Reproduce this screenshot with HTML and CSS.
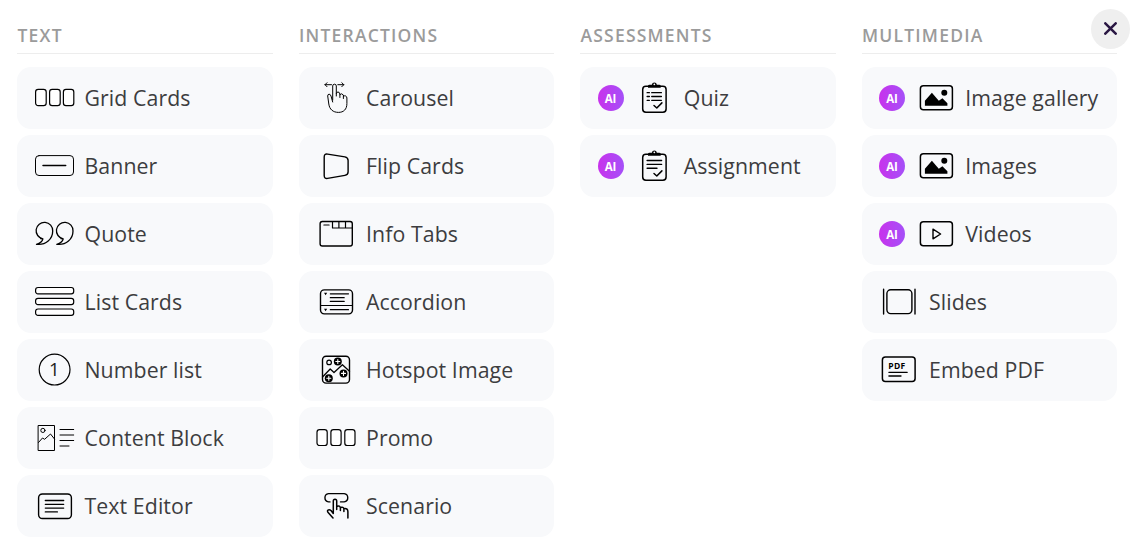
FILE: index.html
```
<!DOCTYPE html>
<html lang="en">
<head>
<meta charset="utf-8">
<title>Add block</title>
<link rel="stylesheet" href="styles.css">
</head>
<body>
<main class="picker">
  <section class="column">
    <h2 class="heading">TEXT</h2>
    <div class="card"><svg class="icon" viewBox="0 0 40 40"><g class="filled"><rect x="1.6" y="11.4" width="10.6" height="16.2" rx="2.6"/><rect x="15.6" y="11.4" width="10.6" height="16.2" rx="2.6"/><rect x="29.4" y="11.4" width="10.4" height="16.2" rx="2.6"/></g></svg><span class="label">Grid Cards</span></div>
    <div class="card"><svg class="icon" viewBox="0 0 40 40"><rect class="thin" x="1.5" y="9.6" width="38" height="19.9" rx="3.5"/><path d="M9 19.6H31.7" stroke-width="1.5"/></svg><span class="label">Banner</span></div>
    <div class="card"><svg class="icon" viewBox="0 0 40 40"><path id="quote" d="M8.9 24.8A8.3 8.3 0 1 1 18.7 17C18.7 25 12 31.4 2.5 30.3C5.5 29.3 8.500 27.4 8.900 24.8L6.600 24.500" stroke-width="1.3"/><use href="#quote" x="20.3"/></svg><span class="label">Quote</span></div>
    <div class="card"><svg class="icon" viewBox="0 0 40 40"><g class="filled"><rect x="1.6" y="5.5" width="38.1" height="6.3" rx="2.4"/><rect x="1.6" y="16.3" width="38.1" height="6.3" rx="2.4"/><rect x="1.6" y="27" width="38.1" height="6.3" rx="2.4"/></g></svg><span class="label">List Cards</span></div>
    <div class="card"><svg class="icon" viewBox="0 0 40 40"><circle cx="20.6" cy="19.6" r="15.4"/><text class="digit" x="20.3" y="26.4">1</text></svg><span class="label">Number list</span></div>
    <div class="card"><svg class="icon" viewBox="0 0 40 40"><rect class="thin" x="4.5" y="7.5" width="16" height="25"/><circle class="thin" cx="8.9" cy="12.4" r="2.1"/><path class="thin" d="M4.5 24.5L8.5 20L10.6 21.3L16.5 16L20.5 21"/><path class="thin" d="M26 11.5H39.7M26 17H39.7M26 22.5H39.7M26 28H35"/></svg><span class="label">Content Block</span></div>
    <div class="card"><svg class="icon" viewBox="0 0 40 40"><rect x="4.6" y="8" width="32.8" height="24.5" rx="3.8" stroke-width="1.4"/><path d="M11.3 14.5H29.7M11.3 18.3H29.7M11.3 22.1H29.7M11.3 25.9H23.4" stroke-width="1.3"/></svg><span class="label">Text Editor</span></div>
  </section>

  <section class="column">
    <h2 class="heading">INTERACTIONS</h2>
    <div class="card"><svg class="icon" viewBox="0 0 40 40"><path class="thin" d="M9 6.7H15.5M11 4.7L9 6.7L11 8.7M21.800 6.7H27.800M25.800 4.7L27.800 6.7L25.800 8.7"/><path class="thin" d="M16.700 22V8Q16.700 6.200 18.500 6.200T20.300 8V18M20.300 15.500Q20.500 14 22 14T23.900 16V19.500M23.900 16.500Q25.500 14.700 27.400 17V20.500M27.400 18Q30.700 17 30.900 20V25.500C30.900 31.500 27.500 34.400 22.500 34.400C17 34.400 13.500 31.300 12.800 26L11.700 18Q11.700 16.200 13.100 16.200Q14.500 16.300 15 18L16.700 24"/></svg><span class="label">Carousel</span></div>
    <div class="card"><svg class="icon" viewBox="0 0 40 40"><path d="M11.600 8.100L28.900 10.900Q32.100 11.500 32.100 14.500V26Q32.100 28.900 28.900 29.400L11.600 32.400Q8.200 32.900 8.200 29.500V11Q8.200 7.500 11.600 8.100Z" stroke-width="1.400"/></svg><span class="label">Flip Cards</span></div>
    <div class="card"><svg class="icon" viewBox="0 0 40 40"><rect x="4.100" y="7.500" width="32.200" height="24.500" rx="2.200" stroke-width="1.400"/><path d="M16.500 7.500V14H36.300M22.900 7.500V14M29.500 7.500V14M7.900 11H13.100"/></svg><span class="label">Info Tabs</span></div>
    <div class="card"><svg class="icon" viewBox="0 0 40 40"><rect x="4.500" y="7.900" width="32" height="24" rx="3.800" stroke-width="1.400"/><path d="M4.500 23.500H36.500M14.300 11.800H32.500M14.300 15.700H28.200M14.300 19.400H28.200M14.300 27.700H32.500"/><path class="solid" d="M8 10.800H11.200L9.600 13.200ZM8 26.800H11.200L9.600 29.200Z"/></svg><span class="label">Accordion</span></div>
    <div class="card"><svg class="icon" viewBox="0 0 40 40"><rect x="6.500" y="6.300" width="27" height="26.800" rx="3.600" stroke-width="1.400"/><circle cx="13.100" cy="12.400" r="2.300"/><path d="M6.500 27L14.200 19L18 22.500L26.400 14.700L33.500 21.200" stroke-width="1.300"/><g class="solid"><circle cx="21.800" cy="11.500" r="4"/><circle cx="27.500" cy="23.400" r="4"/><circle cx="12.800" cy="28.300" r="4"/></g><path class="plus" d="M19.800 11.500H23.800M21.800 9.500V13.500M25.500 23.400H29.500M27.500 21.400V25.400M10.800 28.300H14.800M12.800 26.300V30.300"/></svg><span class="label">Hotspot Image</span></div>
    <div class="card"><svg class="icon" viewBox="0 0 40 40"><g class="filled"><rect x="1" y="11.600" width="10.200" height="15.900" rx="2.600"/><rect x="14.900" y="11.600" width="10.200" height="15.900" rx="2.600"/><rect x="28.800" y="11.600" width="10.200" height="15.900" rx="2.600"/></g></svg><span class="label">Promo</span></div>
    <div class="card"><svg class="icon" viewBox="0 0 40 40"><path d="M14 15.900H12.500A4.200 4.200 0 0 1 12.500 7.600H28.200A4.200 4.200 0 0 1 28.200 15.900H24.500" stroke-width="1.400"/><path d="M17.300 26.500V15Q17.300 13.200 19 13.200T20.700 15V23.500M20.700 20.500Q24.100 19 24.400 22V24.500M24.400 21.500Q27.500 20.500 27.900 23V25.500M27.900 22.700Q32 22 31.900 26V32M17.300 27.500L15 24.500Q13.200 23 11.800 24.300Q11.200 25 11.900 26.200L17 32" stroke-width="1.500"/></svg><span class="label">Scenario</span></div>
  </section>

  <section class="column">
    <h2 class="heading">ASSESSMENTS</h2>
    <div class="card"><span class="badge">AI</span><svg class="icon" viewBox="0 0 40 40"><g id="board"><rect x="8.700" y="8.300" width="23.400" height="26" rx="3.200" stroke-width="1.500"/><path class="solid" d="M14 9.700V8Q14 6.700 15.500 6.700H17.800A2.600 2.600 0 0 1 22.900 6.700H25.200Q26.700 6.700 26.700 8V9.700Z"/><circle class="hole" cx="20.350" cy="6.300" r=".9"/><path d="M20 27.500L22.800 30L27.900 24.900" stroke-width="1.500"/></g><path d="M17.700 14.700H27.400M17.700 18.500H27.400M17.700 22.300H27.400M13.100 14.700H15.400M13.100 18.500H15.400M13.100 22.300H15.400" stroke-width="1.300"/></svg><span class="label">Quiz</span></div>
    <div class="card"><span class="badge">AI</span><svg class="icon" viewBox="0 0 40 40"><use href="#board"/><path d="M13.100 14.500H27.600M13.100 18.400H27.600M13.100 22.300H23" stroke-width="1.400"/></svg><span class="label">Assignment</span></div>
  </section>

  <section class="column">
    <h2 class="heading">MULTIMEDIA</h2>
    <div class="card"><span class="badge">AI</span><svg class="icon" viewBox="0 0 40 40"><g id="photo"><rect x="4.400" y="7.700" width="32" height="24" rx="3" stroke-width="1.500"/><path class="solid" d="M8.900 27.800V22.800L15.900 14.800L22.800 22.800L26.400 20.200L31.400 25.300V27.800Z"/><circle class="solid" cx="28.300" cy="14.700" r="3"/></g></svg><span class="label">Image gallery</span></div>
    <div class="card"><span class="badge">AI</span><svg class="icon" viewBox="0 0 40 40"><use href="#photo"/></svg><span class="label">Images</span></div>
    <div class="card"><span class="badge">AI</span><svg class="icon" viewBox="0 0 40 40"><rect x="4.400" y="7.700" width="32" height="24" rx="3" stroke-width="1.500"/><path d="M17 15.200V24.800L24.600 20Z" stroke-width="1.400"/></svg><span class="label">Videos</span></div>
    <div class="card"><svg class="icon" viewBox="0 0 40 40"><path d="M4.600 7.300V32M36 7.300V32" stroke-width="1.400"/><rect x="7.900" y="7.800" width="25" height="23.800" rx="3.800" stroke-width="1.400"/></svg><span class="label">Slides</span></div>
    <div class="card"><svg class="icon" viewBox="0 0 40 40"><rect x="3.400" y="7" width="32.700" height="24.500" rx="3" stroke-width="1.500"/><text class="pdf" x="9.200" y="18.500">PDF</text><path d="M9.900 22.300H28.200M9.900 26H22" stroke-width="1.300"/></svg><span class="label">Embed PDF</span></div>
  </section>
</main>
<button class="close" aria-label="Close"><svg class="cross" viewBox="0 0 12 12"><path d="M1.200 1.200L10.800 10.800M10.800 1.200L1.200 10.800"/></svg></button>
</body>
</html>
```
FILE: styles.css
```
* { box-sizing: border-box; }

body {
  margin: 0;
  height: 544px;
  overflow: hidden;
  position: relative;
  background: #fff;
  font-family: "Open Sans", "Noto Sans", sans-serif;
  color: #3d3d3f;
}

.picker {
  display: grid;
  grid-template-columns: repeat(4, 1fr);
  column-gap: 26px;
  width: 1100px;
  margin-left: 17px;
}

.column {
  display: flex;
  flex-direction: column;
  gap: 6px;
}

.heading {
  margin: 0 0 7px;
  height: 54px;
  padding: 23px 0 0 .5px;
  border-bottom: 1px solid #ededed;
  font-size: 17.5px;
  line-height: 25px;
  font-weight: 600;
  letter-spacing: 1.2px;
  color: #9b9b9b;
}

.card {
  display: flex;
  align-items: center;
  height: 62px;
  padding-left: 17px;
  border-radius: 14px;
  background: #f8f9fb;
}

.icon {
  flex: none;
  width: 40px;
  height: 40px;
  margin-right: 10.5px;
  overflow: visible;
  fill: none;
  stroke: #000;
  stroke-width: 1.2;
  stroke-linecap: round;
  stroke-linejoin: round;
}

.icon .filled { fill: #fff; }
.icon .thin { stroke-width: 1; }
.icon .solid { fill: #000; stroke: none; }
.icon .hole { fill: #fff; stroke: none; }
.icon .plus { stroke: #fff; stroke-width: 1.1; }

.badge + .icon { margin-right: 9.8px; }

.digit {
  fill: #222;
  stroke: none;
  font-size: 18.5px;
  text-anchor: middle;
}

.pdf {
  fill: #000;
  stroke: none;
  font-size: 8.5px;
  font-weight: 700;
  letter-spacing: .4px;
}

.label {
  font-size: 21.3px;
  line-height: 30px;
  letter-spacing: .08px;
  white-space: nowrap;
}

.badge {
  flex: none;
  display: flex;
  align-items: center;
  justify-content: center;
  width: 26px;
  height: 26px;
  margin: 0 10.5px 0 .5px;
  border-radius: 50%;
  background: linear-gradient(90deg, #c832ec, #a550f8);
  color: #fff;
  font-size: 11.5px;
  font-weight: 700;
}

.close {
  position: absolute;
  top: 9px;
  right: 8px;
  display: flex;
  align-items: center;
  justify-content: center;
  width: 39px;
  height: 40px;
  padding: 0;
  border: 0;
  border-radius: 50%;
  background: #efefef;
}

.cross {
  width: 13px;
  height: 13px;
  margin-bottom: 1px;
  fill: none;
  stroke: #291642;
  stroke-width: 2.3;
  stroke-linecap: round;
}
```
